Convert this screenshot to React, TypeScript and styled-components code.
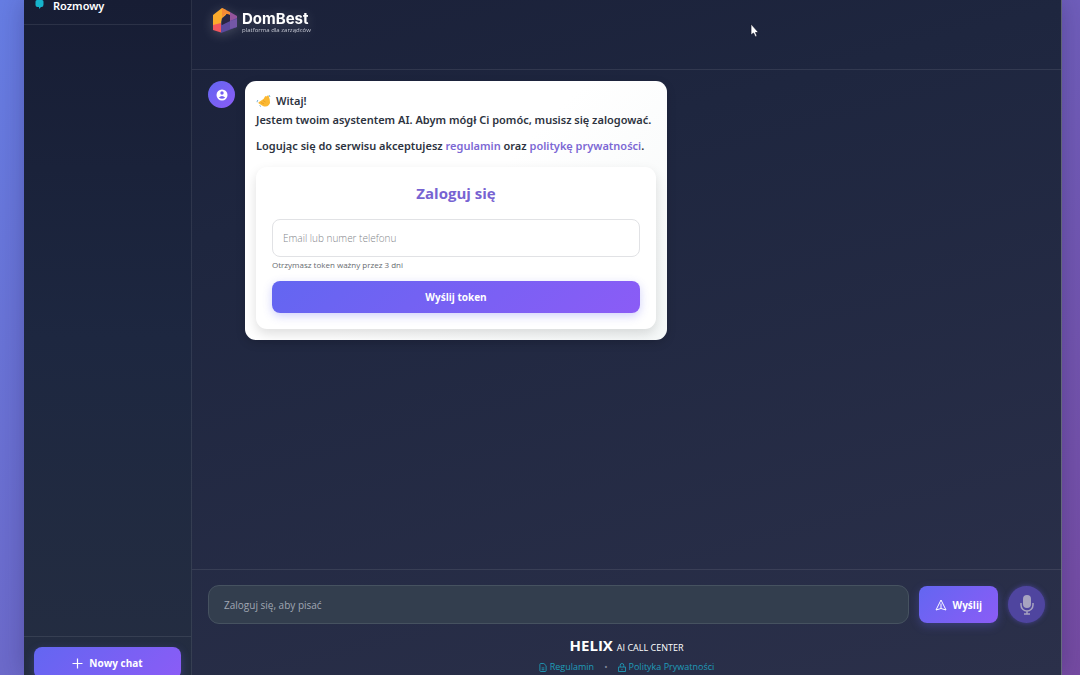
import React from "react";
import styled, { createGlobalStyle, css } from "styled-components";

const GlobalStyle = createGlobalStyle`
  * { box-sizing: border-box; }
  html, body, #root { height: 100%; }
  body {
    margin: 0;
    overflow: hidden;
    font-family: "Open Sans", "Noto Sans", sans-serif;
    font-size: 12px;
    line-height: 18px;
    color: #ffffff;
    background: linear-gradient(135deg, #667de3 0%, #764ba2 100%);
  }
  button, input { font: inherit; }
`;

const line = "rgba(255, 255, 255, 0.09)";
const accent = "linear-gradient(135deg, #6366f1 0%, #8b5cf6 100%)";

const Shell = styled.div`
  display: flex;
  height: 100%;
  margin: 0 18px 0 24px;
  border-right: 1px solid rgba(255, 255, 255, 0.3);
  background: linear-gradient(165deg, #1a2038 0%, #1e263f 30%, #2b304a 100%);
  box-shadow: 0 0 24px rgba(30, 25, 80, 0.3);
`;

const Sidebar = styled.aside`
  display: flex;
  flex-direction: column;
  flex: 0 0 168px;
  border-right: 1px solid ${line};
  background: linear-gradient(180deg, #171d34 0%, #1d2740 50%, #242d41 100%);
`;

const SidebarHeader = styled.header`
  display: flex;
  gap: 9px;
  height: 25px;
  padding: 0 11px;
  border-bottom: 1px solid ${line};
`;

const SidebarTitle = styled.h2`
  margin: 0;
  font-family: "Noto Sans", sans-serif;
  font-size: 11px;
  line-height: 12px;
  font-weight: 600;
`;

const ChatList = styled.nav`
  flex: 1;
`;

const SidebarFooter = styled.footer`
  height: 39px;
  padding: 10px;
  border-top: 1px solid ${line};
`;

const GradientButton = styled.button<{ $height: number; $wide?: boolean }>`
  display: flex;
  align-items: center;
  justify-content: center;
  gap: 6px;
  height: ${(p) => p.$height}px;
  padding: 0 16px;
  border: 0;
  border-radius: 8px;
  color: #ffffff;
  font-size: 10px;
  font-weight: 700;
  background: ${accent};
  box-shadow: 0 3px 10px rgba(99, 102, 241, 0.3);
  ${(p) => p.$wide && css`width: 100%;`}
`;

const Main = styled.main`
  display: flex;
  flex-direction: column;
  flex: 1;
  min-width: 0;
`;

const TopBar = styled.header`
  height: 70px;
  padding: 6px 20px;
  border-bottom: 1px solid ${line};
`;

const Brand = styled.div`
  display: flex;
  align-items: center;
  gap: 4px;
  filter: drop-shadow(0 2px 6px rgba(255, 255, 255, 0.2));
`;

const BrandText = styled.div`
  display: flex;
  flex-direction: column;
  padding-top: 4px;
`;

const BrandName = styled.span`
  font-family: Inter, sans-serif;
  font-size: 15px;
  line-height: 16px;
  font-weight: 700;
`;

const BrandTag = styled.span`
  font-size: 6px;
  line-height: 6px;
  color: #c4c7d2;
`;

const Messages = styled.section`
  display: flex;
  flex: 1;
  align-items: flex-start;
  gap: 10px;
  padding: 11px 16px;
`;

const Avatar = styled.div`
  display: grid;
  place-items: center;
  flex: 0 0 27px;
  height: 27px;
  border-radius: 50%;
  background: ${accent};
`;

const Bubble = styled.article`
  width: 422px;
  padding: 10px 11px 11px;
  border-radius: 11px;
  color: #2d3340;
  font-family: "Noto Sans", sans-serif;
  font-size: 11px;
  line-height: 19px;
  font-weight: 600;
  background: linear-gradient(135deg, #ffffff 50%, #f5f8f8 100%);
  box-shadow: 0 3px 10px rgba(0, 0, 0, 0.15);
`;

const Paragraph = styled.p`
  margin: 0 0 7px;
  white-space: nowrap;
`;

const Greeting = styled.span`
  display: flex;
  align-items: center;
  gap: 4px;
`;

const TextLink = styled.a`
  color: #7c68d4;
  text-decoration: none;
`;

const LoginCard = styled.form`
  display: flex;
  flex-direction: column;
  margin-top: 12px;
  padding: 15px 16px 16px;
  border-radius: 11px;
  font-family: "Open Sans", sans-serif;
  background: #ffffff;
  box-shadow: 0 5px 12px rgba(0, 0, 0, 0.13);
`;

const LoginTitle = styled.h3`
  margin: 0 0 15px;
  font-size: 15px;
  line-height: 22px;
  font-weight: 700;
  text-align: center;
  color: #7763d2;
`;

const LoginInput = styled.input`
  width: 100%;
  height: 38px;
  padding: 0 10px;
  border: 1px solid #e1e2e5;
  border-radius: 8px;
  color: #2d3340;
  font-size: 10px;
  font-weight: 300;
  background: #ffffff;
  &::placeholder { color: #85878c; opacity: 1; }
`;

const Hint = styled.small`
  margin: 2px 0 10px;
  font-size: 8px;
  line-height: 12px;
  font-weight: 400;
  color: #686b70;
`;

const Composer = styled.footer`
  height: 106px;
  padding: 15px 16px 0;
  border-top: 1px solid ${line};
`;

const ComposerRow = styled.form`
  display: flex;
  align-items: center;
  gap: 10px;
`;

const MessageInput = styled.input`
  flex: 1;
  min-width: 0;
  height: 39px;
  padding: 0 15px;
  border: 1px solid #465260;
  border-radius: 11px;
  color: #ffffff;
  font-size: 10px;
  background: #333e4e;
  &::placeholder { color: #a0a7b3; opacity: 1; }
`;

const MicButton = styled.button`
  display: grid;
  place-items: center;
  width: 37px;
  height: 37px;
  padding: 0;
  border: 0;
  border-radius: 50%;
  color: #a7a3c0;
  background: #4f459f;
  box-shadow: 0 0 5px rgba(99, 85, 220, 0.5);
`;

const Credits = styled.div`
  display: flex;
  flex-direction: column;
  align-items: center;
  margin-top: 10px;
`;

const Product = styled.div`
  display: flex;
  align-items: baseline;
  gap: 4px;
  font-size: 9px;
  line-height: 22px;
`;

const ProductName = styled.strong`
  font-size: 15px;
  font-weight: 700;
`;

const Legal = styled.nav`
  display: flex;
  align-items: center;
  gap: 10px;
  color: #81889a;
  font-size: 9px;
  line-height: 16px;
`;

const LegalLink = styled.a`
  display: flex;
  align-items: center;
  gap: 3px;
  color: #1f9cb8;
  text-decoration: none;
`;

const Cursor = styled.svg`
  position: absolute;
  top: 23px;
  left: 750px;
`;

export default function App() {
  return (
    <>
      <GlobalStyle />
      <Shell>
        <Sidebar>
          <SidebarHeader>
            <svg width="9" height="10" viewBox="0 0 9 10" aria-hidden="true">
              <path d="M2 0h5q1.500 0 1.500 1.500v3Q8.500 7 6.500 7H6L4 9V7H2.500Q.5 7 .5 5V1.500Q.5 0 2 0z" fill="#16b3cc" />
            </svg>
            <SidebarTitle>Rozmowy</SidebarTitle>
          </SidebarHeader>
          <ChatList aria-label="Rozmowy" />
          <SidebarFooter>
            <GradientButton type="button" $height={32} $wide>
              <svg width="11" height="11" viewBox="0 0 11 11" aria-hidden="true">
                <path d="M5.500 0.500v10M0.500 5.500h10" stroke="currentColor" strokeWidth="1.200" />
              </svg>
              Nowy chat
            </GradientButton>
          </SidebarFooter>
        </Sidebar>
        <Main>
          <TopBar>
            <Brand>
              <svg width="26" height="28" viewBox="0 0 26 28" aria-hidden="true">
                <path d="M1 9 10 2l4 2v5l-4 3-1 4v4l-8 3z" fill="#fbab2c" />
                <path d="M10 2 18 6v3l-4-1-4 3z" fill="#f58a35" />
                <path d="M1 19 9 17v9.500L1 24z" fill="#f2565e" />
                <path d="M18 6 25 10v8l-7-2z" fill="#94549b" />
                <path d="M9 19l9-4 7-3v9L9 27z" fill="#5b4a9d" />
                <path d="M18 15l7-2v8l-7 2z" fill="#7457a6" />
                <path d="M15 8l3 1v6l-8 4v-6z" fill="#282544" />
              </svg>
              <BrandText>
                <BrandName>DomBest</BrandName>
                <BrandTag>platforma dla zarządców</BrandTag>
              </BrandText>
            </Brand>
          </TopBar>
          <Messages>
            <Avatar>
              <svg width="12" height="12" viewBox="0 0 12 12" aria-hidden="true">
                <circle cx="6" cy="6" r="5.500" fill="#fff" />
                <circle cx="6" cy="4" r="1.700" fill="#7560f2" />
                <path d="M2.800 8.500Q6 5.500 9.200 8.500Q6 11 2.800 8.500" fill="#7560f2" />
              </svg>
            </Avatar>
            <Bubble>
              <Paragraph>
                <Greeting>
                  <svg width="16" height="14" viewBox="0 0 16 14" aria-hidden="true">
                    <path d="M3 8 7.500 5l1.500-2.500q.8-1 1.600 0l.6-.8q1-.8 1.500.4l1 3.400q1 3.500-.8 5.500-2.500 2.500-6 1L2.500 9.300q-.3-.9.500-1.300z" fill="#fbb831" />
                    <path d="M5 8.500l3 1.300M7 6.500l2.500 1.500" stroke="#df9224" strokeWidth=".6" />
                    <path d="M2 6q-1.200 1-.8 2.200M3.500 11.500l1.500 1M13 1l1 2" stroke="#6aa9cf" fill="none" strokeWidth=".9" />
                  </svg>
                  Witaj!
                </Greeting>
                Jestem twoim asystentem AI. Abym mógł Ci pomóc, musisz się zalogować.
              </Paragraph>
              <Paragraph>
                Logując się do serwisu akceptujesz <TextLink href="#regulamin">regulamin</TextLink> oraz{" "}
                <TextLink href="#prywatnosc">politykę prywatności</TextLink>.
              </Paragraph>
              <LoginCard>
                <LoginTitle>Zaloguj się</LoginTitle>
                <LoginInput aria-label="Email lub numer telefonu" placeholder="Email lub numer telefonu" />
                <Hint>Otrzymasz token ważny przez 3 dni</Hint>
                <GradientButton type="button" $height={32} $wide>Wyślij token</GradientButton>
              </LoginCard>
            </Bubble>
          </Messages>
          <Composer>
            <ComposerRow>
              <MessageInput aria-label="Wiadomość" placeholder="Zaloguj się, aby pisać" />
              <GradientButton type="button" $height={37}>
                <svg width="12" height="12" viewBox="0 0 12 12" fill="none" stroke="currentColor" aria-hidden="true">
                  <path d="M6 1 11 11 6 9.500 1 11zM6 4.500v5" strokeLinejoin="round" />
                </svg>
                Wyślij
              </GradientButton>
              <MicButton type="button" aria-label="Nagraj wiadomość">
                <svg width="16" height="20" viewBox="0 0 16 20" aria-hidden="true">
                  <rect x="4" y="0" width="8" height="13" rx="4" fill="currentColor" />
                  <path d="M2 8v2a6 6 0 0 0 12 0V8M8 16v3M5 19h6" fill="none" stroke="currentColor" strokeWidth="1.500" />
                </svg>
              </MicButton>
            </ComposerRow>
            <Credits>
              <Product><ProductName>HELIX</ProductName>AI CALL CENTER</Product>
              <Legal aria-label="Dokumenty">
                <LegalLink href="#regulamin">
                  <svg width="8" height="9" viewBox="0 0 9 10" fill="none" stroke="currentColor" aria-hidden="true">
                    <path d="M1 1.500q0-1 1-1h3.500L8 3v5.500q0 1-1 1H2q-1 0-1-1zM3 5.500h3M3 7.500h3" />
                  </svg>
                  Regulamin
                </LegalLink>
                <span>•</span>
                <LegalLink href="#prywatnosc">
                  <svg width="8" height="9" viewBox="0 0 9 10" fill="none" stroke="currentColor" aria-hidden="true">
                    <path d="M.5 4.500h8v5h-8zM2.500 4.500V2.500a2 2 0 0 1 4 0v2M4.500 6.500v1.500" />
                  </svg>
                  Polityka Prywatności
                </LegalLink>
              </Legal>
            </Credits>
          </Composer>
        </Main>
      </Shell>
      <Cursor width="9" height="15" viewBox="0 0 9 15" aria-hidden="true">
        <path d="M1 1v11l2.500-2 2 4 1.500-1-1.500-3.500H8.500z" fill="#fff" stroke="#111629" strokeWidth=".7" />
      </Cursor>
    </>
  );
}
